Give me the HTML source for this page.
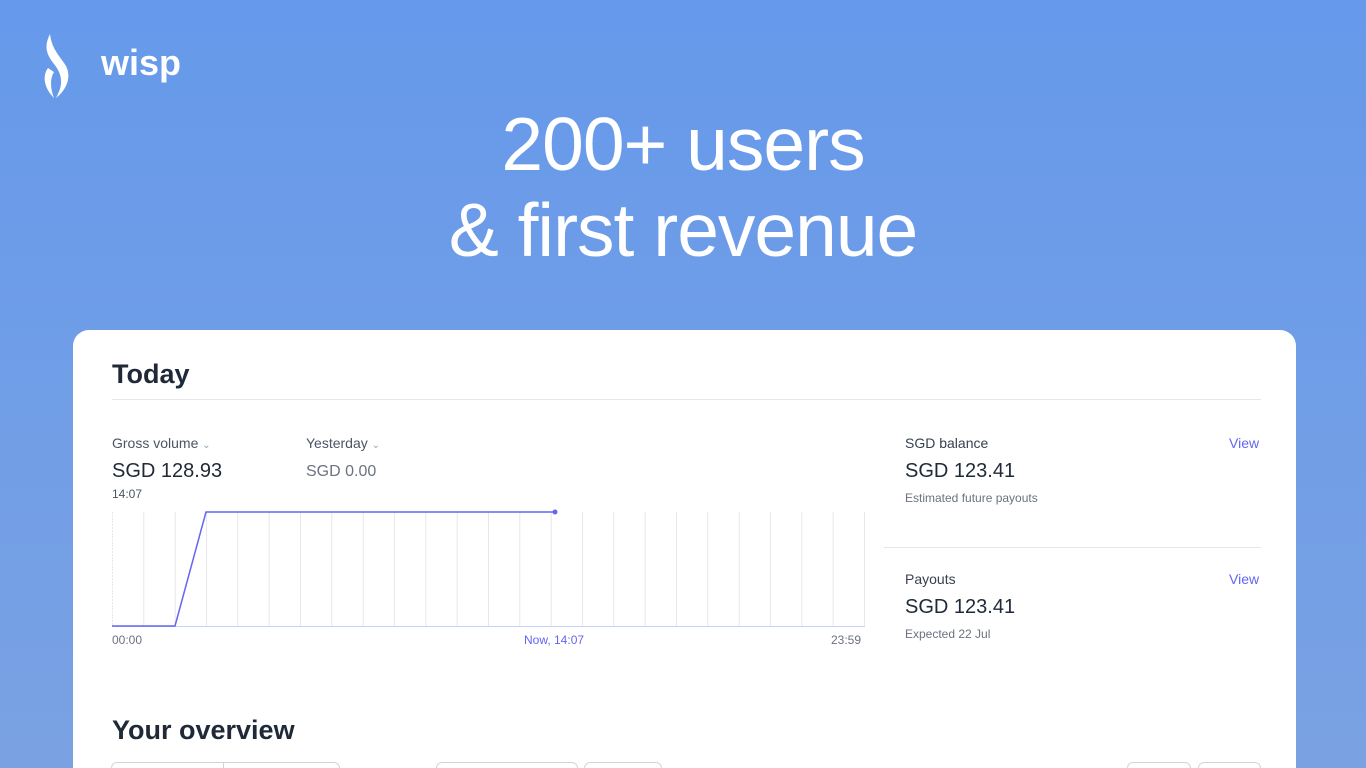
<!DOCTYPE html>
<html><head><meta charset="utf-8"><style>
*{margin:0;padding:0;box-sizing:border-box}
html,body{width:1366px;height:768px;overflow:hidden}
body{background:linear-gradient(180deg,#6699eb 0%,#7aa2e3 100%);font-family:"Liberation Sans",sans-serif;position:relative}
.logo{position:absolute;left:101px;top:42px;color:#fff;font-size:36px;font-weight:bold}
h1{position:absolute;left:0;width:1366px;text-align:center;color:#fff;font-weight:normal;font-size:75px;line-height:86px;top:101px;letter-spacing:-1px}
.card{position:absolute;left:73px;top:330px;width:1223px;height:438px;background:#fff;border-radius:16px 16px 0 0}
.t{position:absolute;color:#1f2937}
.sm{font-size:14px;color:#4b5563}
.big{font-size:20px;color:#1f2937}
.xs{font-size:12px;color:#6b7280}
.v{color:#6366f1;font-size:14px}
.btn{position:absolute;top:762px;height:20px;border:1px solid #d1d5db;border-radius:6px}
</style></head><body>
<svg style="position:absolute;left:42px;top:32px" width="34" height="70" viewBox="0 0 34 70"><path d="M8 2C2 14 4 22 12 32C20 42 22 52 14 66C24 58 30 46 24 34C18 24 10 18 8 2Z" fill="#fff"/><path d="M6 36C0 44 2 56 12 66C8 56 8 46 12 40Z" fill="#fff"/></svg>
<div class="logo">wisp</div>
<h1>200+ users<br>&amp; first revenue</h1>
<div class="card"></div>
<div class="t" style="left:112px;top:359px;font-size:27px;font-weight:bold">Today</div>
<div style="position:absolute;left:112px;top:399px;width:1149px;height:1px;background:#e5e7eb"></div>
<div class="t sm" style="left:112px;top:435px">Gross volume <span style="font-size:10px;color:#9ca3af">&#8964;</span></div>
<div class="t sm" style="left:306px;top:435px">Yesterday <span style="font-size:10px;color:#9ca3af">&#8964;</span></div>
<div class="t big" style="left:112px;top:460px">SGD 128.93</div>
<div class="t" style="left:306px;top:463px;font-size:16px;color:#6b7280">SGD 0.00</div>
<div class="t xs" style="left:112px;top:487px;color:#4b5563">14:07</div>
<svg style="position:absolute;left:110px;top:505px" width="760" height="128">
<g stroke="#e5e7eb" stroke-width="1">
<line x1="2.5" y1="7" x2="2.5" y2="121" stroke-dasharray="2 1"/><line x1="33.8" y1="7" x2="33.8" y2="121"/><line x1="65.2" y1="7" x2="65.2" y2="121"/><line x1="96.5" y1="7" x2="96.5" y2="121"/><line x1="127.8" y1="7" x2="127.8" y2="121"/><line x1="159.2" y1="7" x2="159.2" y2="121"/><line x1="190.5" y1="7" x2="190.5" y2="121"/><line x1="221.8" y1="7" x2="221.8" y2="121"/><line x1="253.2" y1="7" x2="253.2" y2="121"/><line x1="284.5" y1="7" x2="284.5" y2="121"/><line x1="315.8" y1="7" x2="315.8" y2="121"/><line x1="347.2" y1="7" x2="347.2" y2="121"/><line x1="378.5" y1="7" x2="378.5" y2="121"/><line x1="409.8" y1="7" x2="409.8" y2="121"/><line x1="441.2" y1="7" x2="441.2" y2="121"/><line x1="472.5" y1="7" x2="472.5" y2="121"/><line x1="503.8" y1="7" x2="503.8" y2="121"/><line x1="535.2" y1="7" x2="535.2" y2="121"/><line x1="566.5" y1="7" x2="566.5" y2="121"/><line x1="597.8" y1="7" x2="597.8" y2="121"/><line x1="629.2" y1="7" x2="629.2" y2="121"/><line x1="660.5" y1="7" x2="660.5" y2="121"/><line x1="691.8" y1="7" x2="691.8" y2="121"/><line x1="723.2" y1="7" x2="723.2" y2="121"/><line x1="754.5" y1="7" x2="754.5" y2="121"/>
</g>
<line x1="2" y1="121.5" x2="755" y2="121.5" stroke="#c7d2fe"/>
<polyline points="2,121 65,121 96,7 445,7" fill="none" stroke="#6366f1" stroke-width="1.5"/>
<circle cx="445" cy="7" r="2.5" fill="#6366f1"/>
</svg>
<div class="t xs" style="left:112px;top:633px">00:00</div>
<div class="t xs" style="left:524px;top:633px;color:#6366f1">Now, 14:07</div>
<div class="t xs" style="left:831px;top:633px">23:59</div>
<div class="t sm" style="left:905px;top:435px;color:#374151">SGD balance</div>
<div class="t v" style="left:1229px;top:435px">View</div>
<div class="t big" style="left:905px;top:460px">SGD 123.41</div>
<div class="t xs" style="left:905px;top:491px">Estimated future payouts</div>
<div style="position:absolute;left:884px;top:547px;width:377px;height:1px;background:#e5e7eb"></div>
<div class="t sm" style="left:905px;top:571px;color:#374151">Payouts</div>
<div class="t v" style="left:1229px;top:571px">View</div>
<div class="t big" style="left:905px;top:596px">SGD 123.41</div>
<div class="t xs" style="left:905px;top:627px">Expected 22 Jul</div>
<div class="t" style="left:112px;top:715px;font-size:27px;font-weight:bold">Your overview</div>
<div class="btn" style="left:111px;width:229px"></div>
<div style="position:absolute;left:223px;top:762px;width:1px;height:10px;background:#d1d5db"></div>
<div class="btn" style="left:436px;width:142px"></div>
<div class="btn" style="left:584px;width:78px"></div>
<div class="btn" style="left:1127px;width:64px"></div>
<div class="btn" style="left:1198px;width:63px"></div>
</body></html>
